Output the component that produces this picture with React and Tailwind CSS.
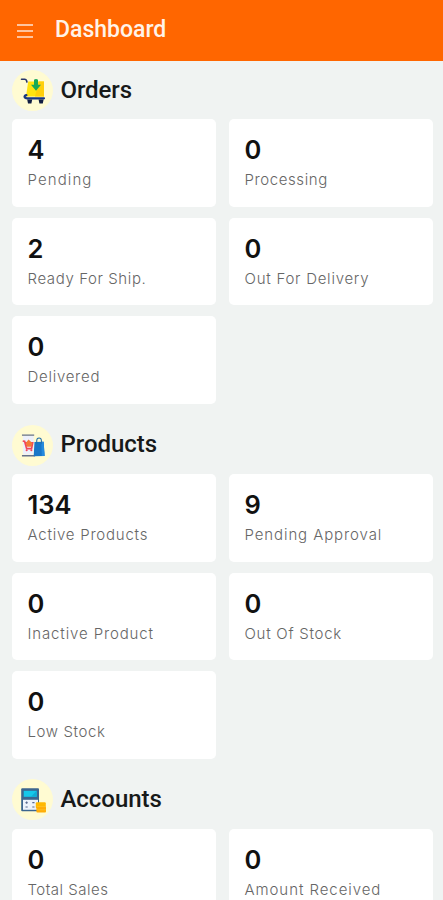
import React from "react";

function OrdersIcon() {
  return (
    <svg viewBox="0 0 40 40" className="size-10">
      <path d="M15.2 11.5h15.8v15H13z" fill="#ffe30f" />
      <path d="M26 11.5h5v15h-9z" fill="#ffcf08" />
      <path d="M8.5 9.2h3.2c1 0 1.6.5 1.9 1.5l.3 1.3" fill="none" stroke="#28366b" strokeWidth="1.6" strokeLinecap="round" />
      <path d="M31 28.3H14.3c-3.4 0-3.6-3-.9-3.1" fill="none" stroke="#17367f" strokeWidth="2.2" strokeLinecap="round" />
      <path d="M14.2 29.5h5l-.8 4h-3.4zM25.6 29.5h5l-.8 4h-3.4z" fill="#111d42" />
      <path d="M21 9.7q2-1.2 4 0v5.1h3l-5 6-5-6h3z" fill="#18a957" />
    </svg>
  );
}

function ProductsIcon() {
  return (
    <svg viewBox="0 0 40 40" className="size-10">
      <g transform="translate(.5 1.4) scale(.94)">
        <path d="M10 10h11.5v20H10z" fill="#edf0fb" />
        <path d="M9 9.3h13M9 31.2h14" stroke="#65718b" strokeWidth="1.4" />
        <path d="m9.8 15.5 2 .4 2.2 7.8h5.2l1.2-6.2h-7.7M13 20h6.5" fill="none" stroke="#f1455a" strokeWidth="1.8" />
        <path d="M13.2 17.5 16 14l4 3.7-1 4h-4.8z" fill="#f47a36" />
        <circle cx="14" cy="25.3" r="1.1" fill="#f1455a" />
        <circle cx="19" cy="25.3" r="1.1" fill="#f1455a" />
        <path d="m22.3 16.5 9.8-.3 1 15.2-11.6.3z" fill="#1876c8" />
        <path d="m29.6 16.3 2.5-.1 1 15.2-3 .1z" fill="#248ade" />
        <path d="M24.7 18.5v-3.2c0-4 5-4 5 0v3.2" fill="none" stroke="#246fa8" strokeWidth="1.1" />
      </g>
    </svg>
  );
}

function AccountsIcon() {
  return (
    <svg viewBox="0 0 40 40" className="size-10">
      <rect x="8.2" y="8.3" width="17.8" height="23" rx="1" fill="#3c668f" />
      <rect x="10.7" y="10.8" width="13" height="6" fill="#16c8ea" />
      <path d="m18 16.8 5.7-6v6z" fill="#10acd5" />
      <path d="M10 19.8h15v10H10z" fill="#edf3fb" />
      <path d="M12.5 22.7h2.2m4.6 0h2.2M12.5 27h2.2m4.6 0h2.2M13.6 21.6v2.2" stroke="#586a90" strokeWidth="1.2" />
      <rect x="22.8" y="22.3" width="10" height="6" rx="1" fill="#ffb900" />
      <rect x="23.4" y="26.6" width="9.6" height="6" rx="1" fill="#ffad05" />
      <path d="M24 26.6h9M24.2 29.8H33" stroke="#ffcf3f" strokeWidth=".5" />
    </svg>
  );
}

const sections = [
  {
    title: "Orders",
    Icon: OrdersIcon,
    titleClass: "tracking-[-0.1px]",
    cards: [
      ["4", "Pending", "tracking-[1.1px]"],
      ["0", "Processing", "tracking-[0.6px]"],
      ["2", "Ready For Ship.", "tracking-[0.6px]"],
      ["0", "Out For Delivery", "tracking-[0.75px]"],
      ["0", "Delivered", "tracking-[0.73px]"],
    ],
  },
  {
    title: "Products",
    Icon: ProductsIcon,
    titleClass: "tracking-[-0.05px]",
    cards: [
      ["134", "Active Products", "tracking-[0.77px]"],
      ["9", "Pending Approval", "tracking-[0.9px]"],
      ["0", "Inactive Product", "tracking-[0.87px]"],
      ["0", "Out Of Stock", "tracking-[0.73px]"],
      ["0", "Low Stock", "tracking-[0.6px]"],
    ],
  },
  {
    title: "Accounts",
    Icon: AccountsIcon,
    titleClass: "tracking-[-0.05px]",
    cards: [
      ["0", "Total Sales", "tracking-[0.5px]"],
      ["0", "Amount Received", "tracking-[0.93px]"],
    ],
  },
];

function StatCard({ value, label, labelClass }) {
  return (
    <div className="h-[87.5px] rounded-[5px] bg-white pt-[15px] pl-[15.5px]">
      <div className="font-['Inter',sans-serif] text-[25.5px] leading-8 font-semibold text-[#111111]">{value}</div>
      <div className={`mt-1 font-['Inter',sans-serif] text-[15px] leading-5 font-light whitespace-nowrap text-[#666666] ${labelClass}`}>
        {label}
      </div>
    </div>
  );
}

export default function App() {
  return (
    <div className="h-[900px] w-full overflow-hidden bg-[#f0f3f2]">
      <header className="flex h-[61px] items-center bg-[#ff6600] pl-[17px]">
        <svg viewBox="0 0 16 16" className="mt-px size-4" stroke="#ffe4d2" strokeWidth="1.5">
          <path d="M0 2h16M0 8h16M0 14h16" />
        </svg>
        <h1 className="-mt-[2px] ml-[22px] font-['Roboto',sans-serif] text-[23px] leading-7 font-medium text-[#fff3e8]">Dashboard</h1>
      </header>
      <main className="flex flex-col gap-[20.8px] pt-[8.8px] pr-[10px] pl-3">
        {sections.map(({ title, Icon, titleClass, cards }) => (
          <section key={title}>
            <div className="mb-[8.5px] flex h-[41px] items-center">
              <div className="flex size-[41px] items-center justify-center rounded-full bg-[#fffbd2]">
                <Icon />
              </div>
              <h2 className={`-mt-[1.4px] ml-[7.5px] font-['Roboto',sans-serif] text-[24px] leading-7 font-medium text-[#171919] ${titleClass}`}>{title}</h2>
            </div>
            <div className="grid grid-cols-2 gap-x-[13px] gap-y-[11px]">
              {cards.map(([value, label, labelClass]) => (
                <StatCard key={label} value={value} label={label} labelClass={labelClass} />
              ))}
            </div>
          </section>
        ))}
      </main>
    </div>
  );
}
